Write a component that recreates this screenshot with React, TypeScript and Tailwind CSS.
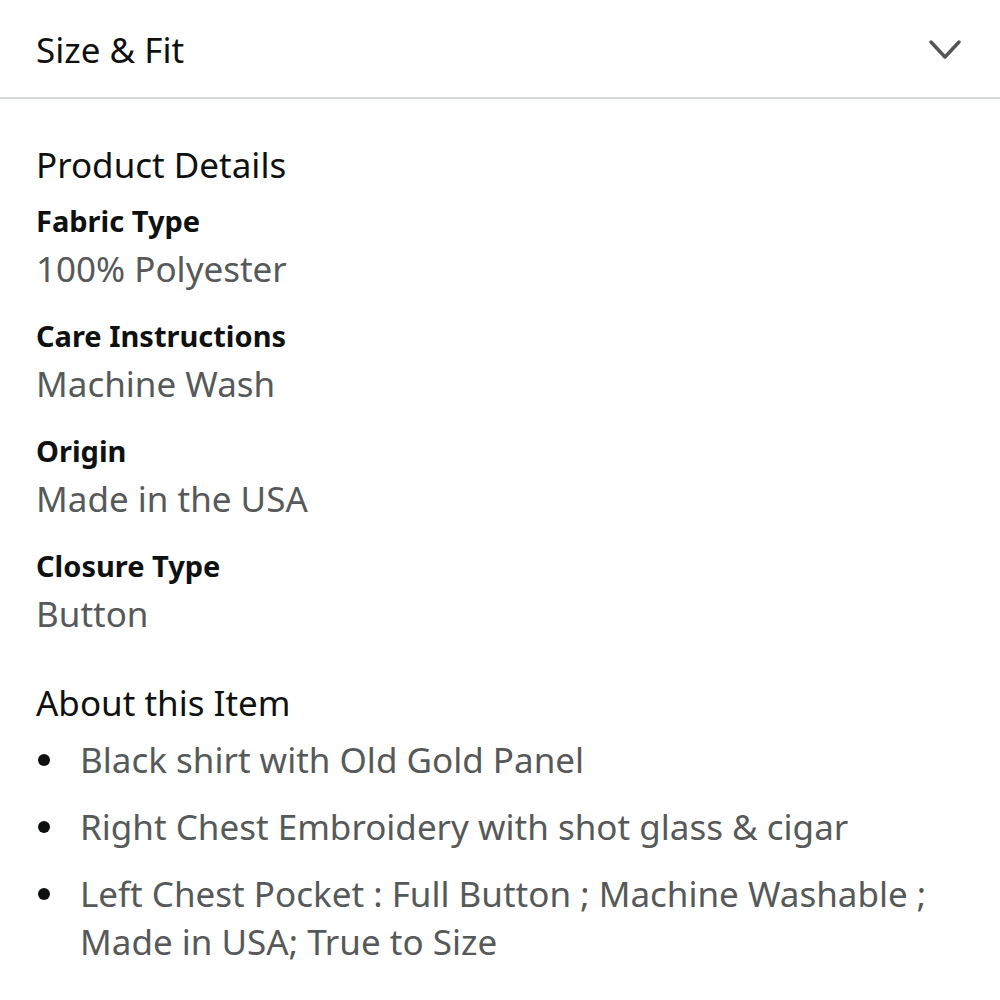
import React from 'react';

const details = [
  { label: 'Fabric Type', value: '100% Polyester' },
  { label: 'Care Instructions', value: 'Machine Wash' },
  { label: 'Origin', value: 'Made in the USA' },
  { label: 'Closure Type', value: 'Button' },
];

const bullets = [
  'Black shirt with Old Gold Panel',
  'Right Chest Embroidery with shot glass & cigar',
  'Left Chest Pocket : Full Button ; Machine Washable ; Made in USA; True to Size',
];

const App = () => {
  return (
    <div className="w-[1000px] h-[1000px] bg-white overflow-hidden font-['Noto_Sans',sans-serif] text-[#0f1111]">
      {/* Accordion header */}
      <div className="flex items-center justify-between h-[99px] pl-9 pr-[38px] border-b-2 border-[#d5d9d9]">
        <span className="text-[35px] leading-none mt-[2px]">Size &amp; Fit</span>
        <svg width="34" height="22" viewBox="0 0 34 22" fill="none" className="mt-[2px]">
          <path d="M3 3 L17 18 L31 3" stroke="#555" strokeWidth="3.5" strokeLinecap="round" strokeLinejoin="round" />
        </svg>
      </div>

      <div className="px-9 pt-[46px]">
        <h2 className="text-[35px] leading-[40px]">Product Details</h2>
        <div className="flex flex-col gap-[23px] mt-[16px]">
          {details.map((d) => (
            <div key={d.label}>
              <div className="text-[29px] font-bold leading-[40px]">{d.label}</div>
              <div className="text-[35px] leading-[48px] mt-1 text-[#565959]">{d.value}</div>
            </div>
          ))}
        </div>

        <h2 className="text-[35px] leading-[40px] mt-[45px]">About this Item</h2>
        <ul className="mt-[13px] flex flex-col gap-[19px]">
          {bullets.map((b) => (
            <li key={b} className="flex">
              <span className="w-[44px] shrink-0 pt-[18px]">
                <span className="block ml-[2px] w-[12px] h-[12px] rounded-full bg-[#0f1111]" />
              </span>
              <span className="text-[35px] leading-[48px] text-[#565959]">{b}</span>
            </li>
          ))}
        </ul>
      </div>
    </div>
  );
};

export default App;
